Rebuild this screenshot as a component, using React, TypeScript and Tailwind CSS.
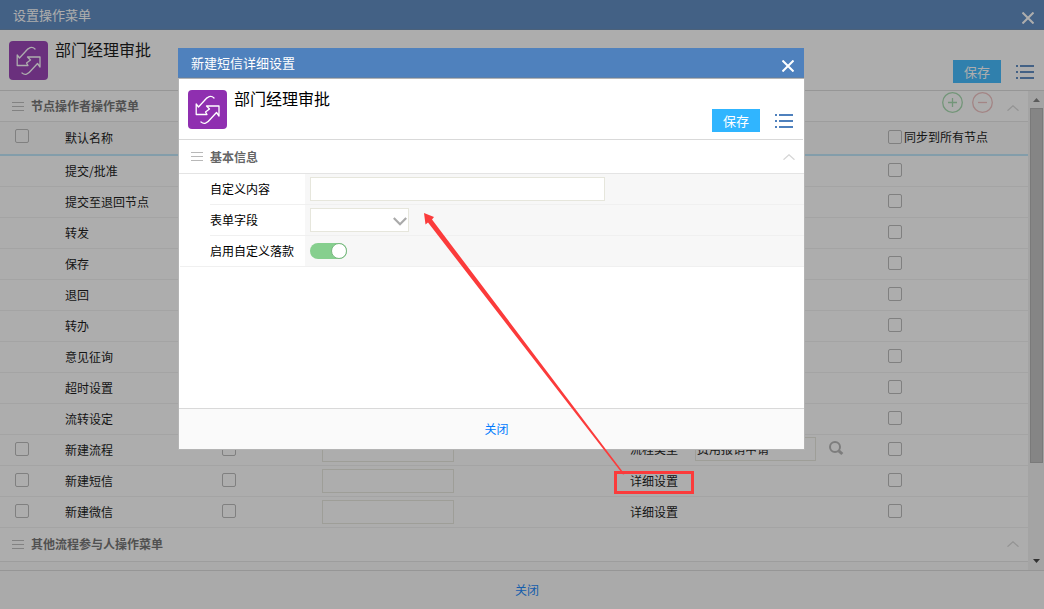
import React from 'react';
import clsx from 'clsx';

type Extra = 'flow' | 'link';

type Row = {
  name: string;
  extra?: Extra;
};

const rows: Row[] = [
  { name: '提交/批准' },
  { name: '提交至退回节点' },
  { name: '转发' },
  { name: '保存' },
  { name: '退回' },
  { name: '转办' },
  { name: '意见征询' },
  { name: '超时设置' },
  { name: '流转设定' },
  { name: '新建流程', extra: 'flow' },
  { name: '新建短信', extra: 'link' },
  { name: '新建微信', extra: 'link' },
];

function FlowIcon() {
  return (
    <svg viewBox="0 0 39 39" className="h-[39px] w-[39px] shrink-0" aria-hidden="true">
      <rect width="39" height="39" rx="4" fill="#8f2fb0" />
      <path
        d="M26 8C23 5 19.500 6.500 16 11L10.500 17L8.200 14V24.500H19L17.500 22L21.500 19L18.500 16H31V26L28.500 22.500L22.500 29C19 33.500 16 34.500 13 32"
        fill="none"
        stroke="#fff"
        strokeWidth="1.300"
        strokeLinejoin="round"
        strokeLinecap="round"
      />
    </svg>
  );
}

function CloseButton() {
  return (
    <button type="button" aria-label="关闭窗口" className="mt-[6px] p-1">
      <svg viewBox="0 0 12 12" className="h-3 w-3" stroke="#fff" strokeWidth="2" aria-hidden="true">
        <path d="M0.500 0.500L11.500 11.500M11.500 0.500L0.500 11.500" />
      </svg>
    </button>
  );
}

function Chevron() {
  return (
    <svg viewBox="0 0 12 6" className="h-[6px] w-3" fill="none" stroke="#d6d6d6" strokeWidth="1.3" aria-hidden="true">
      <path d="M0.500 5.700L6 0.800L11.500 5.700" />
    </svg>
  );
}

function Bars() {
  return (
    <svg viewBox="0 0 12 9" className="h-[9px] w-3" stroke="#b8b8b8" aria-hidden="true">
      <path d="M0 0.500H12M0 4.500H12M0 8.500H12" />
    </svg>
  );
}

function Check({ label }: { label: string }) {
  return (
    <input
      type="checkbox"
      aria-label={label}
      className="block h-[14px] w-[14px] shrink-0 appearance-none rounded-xs border border-[#b4b4b4]"
    />
  );
}

function TitleBar({ title }: { title: string }) {
  return (
    <div className="flex h-[30px] items-center justify-between border-b border-[#5c80ab] bg-[#4f81bd] pr-[6px] pl-[13px] text-[13px] text-white">
      <h2>{title}</h2>
      <CloseButton />
    </div>
  );
}

function Heading() {
  return (
    <div className="flex h-[61px] items-start justify-between border-b border-[#d9d9d9] bg-white pt-[11px] pr-[10px] pl-[9px]">
      <div className="flex gap-[7px]">
        <FlowIcon />
        <h1 className="text-base leading-4">部门经理审批</h1>
      </div>
      <div className="flex items-center gap-[15px] pt-[19px]">
        <button type="button" className="h-[23px] w-12 bg-[#30b5ff] text-[13px] leading-[23px] text-white">
          保存
        </button>
        <button type="button" aria-label="更多">
          <svg viewBox="0 0 18 14" className="h-[14px] w-[18px]" stroke="#4f81bd" strokeWidth="2" aria-hidden="true">
            <path d="M0 1H2M4 1H18M0 7H2M4 7H18M0 13H2M4 13H18" />
          </svg>
        </button>
      </div>
    </div>
  );
}

function Section({ title, tall, tools }: { title: string; tall?: boolean; tools?: boolean }) {
  return (
    <div
      className={clsx(
        'flex items-center justify-between border-b border-[#e4e4e4] pr-[9px] pl-3',
        tall ? 'h-[34px]' : 'h-[31px]'
      )}
    >
      <div className="flex items-center gap-[7px]">
        <Bars />
        <h3 className="font-bold text-[#666]">{title}</h3>
      </div>
      <div className="flex items-center gap-[9px]">
        {tools && (
          <>
            <button type="button" aria-label="添加" className="-mt-2">
              <svg viewBox="0 0 21 21" className="h-[21px] w-[21px]" fill="none" stroke="#9fd8a8" strokeWidth="1.3" aria-hidden="true">
                <circle cx="10.500" cy="10.500" r="9.800" />
                <path d="M10.500 6V15M6 10.500H15" />
              </svg>
            </button>
            <button type="button" aria-label="删除" className="-mt-2">
              <svg viewBox="0 0 21 21" className="h-[21px] w-[21px]" fill="none" stroke="#eebcbc" strokeWidth="1.3" aria-hidden="true">
                <circle cx="10.500" cy="10.500" r="9.800" />
                <path d="M6 10.500H15" />
              </svg>
            </button>
          </>
        )}
        <button type="button" aria-label="收起" className={clsx(tools && 'mt-1 ml-[5px]')}>
          <Chevron />
        </button>
      </div>
    </div>
  );
}

function MenuTable() {
  return (
    <table className="w-full table-fixed border-collapse text-left">
      <colgroup>
        <col className="w-[65px]" />
        <col className="w-[157px]" />
        <col className="w-[100px]" />
        <col className="w-[308px]" />
        <col className="w-[258px]" />
        <col />
      </colgroup>
      <thead>
        <tr className="h-[33px] border-b-2 border-[#b9e4fb] bg-[#fafafa]">
          <th className="pb-1 pl-[15px]"><Check label="全选" /></th>
          <th className="font-normal">默认名称</th>
          <th />
          <th />
          <th />
          <th className="pb-[2px] font-normal">
            <label className="flex items-center gap-[2px]">
              <Check label="同步到所有节点" />
              同步到所有节点
            </label>
          </th>
        </tr>
      </thead>
      <tbody>
        {rows.map((row) => (
          <tr key={row.name} className="h-[31px] border-b border-[#f0f0f0]">
            <td className="pb-[2px] pl-[15px]">{row.extra && <Check label={'选择' + row.name} />}</td>
            <td>{row.name}</td>
            <td className="pb-[2px]">{row.extra && <Check label={'启用' + row.name} />}</td>
            <td>
              {row.extra && (
                <input aria-label={row.name + '名称'} className="block h-6 w-[132px] border border-[#e6e6dc] px-1" />
              )}
            </td>
            <td className="pt-px">
              {row.extra === 'link' && <a href="#detail">详细设置</a>}
              {row.extra === 'flow' && (
                <div className="-mt-[3px] flex items-center">
                  <label htmlFor="flow" className="w-[65px]">流程类型</label>
                  <input id="flow" defaultValue="费用报销申请" className="h-6 w-[121px] border border-[#e6e6dc] px-px" />
                  <button type="button" aria-label="搜索" className="ml-[13px]">
                    <svg viewBox="0 0 15 15" className="h-[15px] w-[15px]" fill="none" stroke="#b0b0b0" aria-hidden="true">
                      <circle cx="6" cy="6" r="5" strokeWidth="2" />
                      <path d="M9.800 9.800L13.300 13" strokeWidth="3" />
                    </svg>
                  </button>
                </div>
              )}
            </td>
            <td className="pb-[2px]"><Check label={'同步' + row.name} /></td>
          </tr>
        ))}
      </tbody>
    </table>
  );
}

function ScrollBar() {
  return (
    <div className="flex w-4 shrink-0 flex-col items-center bg-[#f1f1f1] pt-[7px] pb-[7px]">
      <svg viewBox="0 0 7 4" className="mb-[6px] h-1 w-[7px]" fill="#777" aria-hidden="true">
        <path d="M0 4L3.500 0L7 4Z" />
      </svg>
      <div className="h-[355px] w-[13px] border border-[#aaa] bg-[#bcbcbc]" />
      <svg viewBox="0 0 7 4" className="mt-auto h-1 w-[7px]" fill="#333" aria-hidden="true">
        <path d="M0 0L3.500 4L7 0Z" />
      </svg>
    </div>
  );
}

function Footer({ tall }: { tall?: boolean }) {
  return (
    <div
      className={clsx(
        'flex items-center justify-center border-t border-[#d9d9d9] bg-[#fafafa] pl-[10px]',
        tall ? 'h-[41px]' : 'h-[39px]'
      )}
    >
      <button type="button" className="text-[#017afd]">关闭</button>
    </div>
  );
}

function Field({ label, htmlFor, last, children }: { label: string; htmlFor: string; last?: boolean; children: React.ReactNode }) {
  return (
    <div className={clsx('flex h-[31px]', last && 'border-b border-[#f0f0f0]')}>
      <div className="w-[125px] shrink-0 pl-[30px]">
        <label htmlFor={htmlFor} className={clsx('flex h-full items-center', !last && 'border-b border-[#f0f0f0]')}>
          {label}
        </label>
      </div>
      <div className={clsx('flex grow items-center bg-[#f7f7f7] pl-[5px]', !last && 'border-b border-[#f0f0f0]')}>
        {children}
      </div>
    </div>
  );
}

function Dialog() {
  return (
    <div role="dialog" aria-label="新建短信详细设置" className="absolute top-12 left-[178px] w-[627px]">
      <div className="mr-px">
        <TitleBar title="新建短信详细设置" />
      </div>
      <div className="border border-[#b4b4b4] bg-white">
        <div className="pr-px">
          <Heading />
        </div>
        <Section title="基本信息" tall />
        <div className="pl-px">
          <Field label="自定义内容" htmlFor="content">
            <input id="content" className="h-6 w-[295px] border border-[#e6e6dc] bg-white px-1" />
          </Field>
          <Field label="表单字段" htmlFor="field">
            <span className="relative">
              <select id="field" className="block h-6 w-[99px] appearance-none border border-[#e6e6dc] bg-white px-1" />
              <svg viewBox="0 0 14 9" className="pointer-events-none absolute top-[9px] right-[2px] h-[9px] w-[14px]" fill="none" stroke="#aaa" strokeWidth="2.200" aria-hidden="true">
                <path d="M0.800 1L7 7.200L13.200 1" />
              </svg>
            </span>
          </Field>
          <Field label="启用自定义落款" htmlFor="sign" last>
            <span className="relative">
              <input id="sign" type="checkbox" defaultChecked className="block h-4 w-[37px] appearance-none rounded-full bg-[#86cf8e]" />
              <span className="pointer-events-none absolute top-0 right-0 h-4 w-4 rounded-full border border-[#79b780] bg-white" />
            </span>
          </Field>
        </div>
        <div className="h-[141px]" />
        <Footer tall />
      </div>
    </div>
  );
}

// red frame and arrow pointing from the link to the dialog
function Pointer() {
  return (
    <svg viewBox="0 0 280 290" className="pointer-events-none absolute top-[208px] left-[420px] h-[290px] w-[280px]" aria-hidden="true">
      <rect x="195.500" y="264.500" width="77" height="20" fill="none" stroke="#fb3b3b" strokeWidth="3" />
      <path d="M4 5L14 9L12 11.500L204.500 266L203 266.500L8 14.500L5.500 16.500Z" fill="#fb3b3b" />
    </svg>
  );
}

export default function App() {
  return (
    <div className="relative flex min-h-screen flex-col bg-white font-['Noto_Sans_CJK_SC',sans-serif] text-xs text-black">
      <TitleBar title="设置操作菜单" />
      <Heading />
      <div className="flex grow bg-[#fafafa]">
        <div className="min-w-0 grow">
          <div className="bg-white">
            <Section title="节点操作者操作菜单" tools />
            <MenuTable />
            <Section title="其他流程参与人操作菜单" tall />
          </div>
        </div>
        <ScrollBar />
      </div>
      <Footer />
      <div className="absolute inset-0 bg-[#323232]/40" />
      <Dialog />
      <Pointer />
    </div>
  );
}
